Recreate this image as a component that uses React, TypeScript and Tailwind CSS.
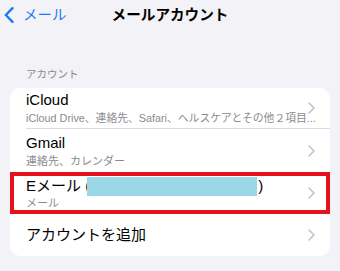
// メールアカウント画面（iOS 設定風）
const font = { fontFamily: '"Liberation Sans", "Noto Sans CJK JP", sans-serif' };

function Chevron() {
  return (
    <svg width="7" height="12" viewBox="0 0 7 12" fill="none" className="shrink-0">
      <path d="M1 1 L6 6 L1 11" stroke="#c4c4c7" strokeWidth="1.6" strokeLinecap="round" strokeLinejoin="round" />
    </svg>
  );
}

function BackChevron() {
  return (
    <svg width="10" height="16" viewBox="0 0 10 16" fill="none">
      <path d="M8.5 1.2 L1.8 8 L8.5 14.8" stroke="#1a7cf5" strokeWidth="2.4" strokeLinecap="round" strokeLinejoin="round" />
    </svg>
  );
}

export default function App() {
  return (
    <div className="h-[271px] w-[340px] overflow-hidden bg-[#f2f2f7] text-black" style={font}>
      {/* ナビゲーションバー */}
      <header className="grid h-[30px] grid-cols-[1fr_auto_1fr] items-center">
        <div className="flex items-center gap-[9px] pl-[4px]">
          <BackChevron />
          <span className="text-[14.5px] leading-none text-[#1a7cf5]">メール</span>
        </div>
        <span className="text-[14.6px] font-bold leading-none">メールアカウント</span>
        <div />
      </header>

      {/* セクション見出し */}
      <div className="pl-[26px] pt-[36px] text-[10.5px] leading-[16px] text-[#8a8a8e]">アカウント</div>

      <div className="mx-[10px] mt-[6px] overflow-hidden rounded-[10px] bg-white">
        {/* iCloud */}
        <div className="pl-[16px]">
          <div className="relative flex h-[41px] items-center border-b border-[#dcdce0] pr-[15px]">
            <div className="min-w-0 flex-1">
              <div className="text-[15px] leading-[20px]">iCloud</div>
              <div className="whitespace-nowrap text-[10.8px] leading-[16px] text-[#8a8a8e]">
                iCloud Drive、連絡先、Safari、ヘルスケアとその他２項目...
              </div>
            </div>
            <div className="absolute right-[15px] top-1/2 -translate-y-1/2">
              <Chevron />
            </div>
          </div>
        </div>

        {/* Gmail */}
        <div className="flex h-[43px] items-center justify-between pl-[16px] pr-[15px]">
          <div>
            <div className="text-[15px] leading-[20px]">Gmail</div>
            <div className="text-[11px] leading-[16px] text-[#8a8a8e]">連絡先、カレンダー</div>
          </div>
          <Chevron />
        </div>

        {/* Eメール（赤枠） */}
        <div className="flex h-[42px] items-center justify-between border-4 border-[#e3121c] pl-[12px] pr-[11px]">
          <div>
            <div className="flex items-center text-[15px] leading-[20px]">
              <span className="whitespace-pre">Eメール (</span>
              <span className="ml-[-3px] mr-[1px] h-[19px] w-[170px] bg-[#9ad8e8]" />
              <span>)</span>
            </div>
            <div className="text-[11px] leading-[14px] text-[#8a8a8e]">メール</div>
          </div>
          <Chevron />
        </div>

        {/* アカウントを追加 */}
        <div className="flex h-[42px] items-center justify-between pl-[16px] pr-[15px]">
          <span className="text-[15px]">アカウントを追加</span>
          <Chevron />
        </div>
      </div>
    </div>
  );
}
